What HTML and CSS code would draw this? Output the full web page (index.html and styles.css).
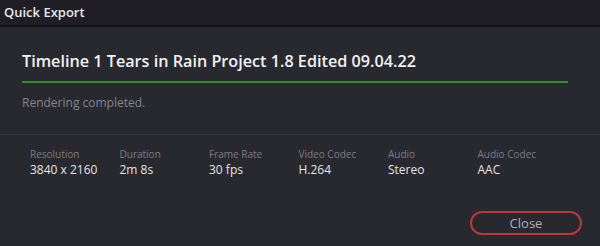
FILE: index.html
```html
<!DOCTYPE html>
<html>
<head>
<meta charset="utf-8">
<link rel="stylesheet" href="styles.css">
</head>
<body>
<div class="dialog">
  <div class="titlebar">Quick Export</div>
  <div class="content">
    <div class="job">Timeline 1 Tears in Rain Project 1.8 Edited 09.04.22</div>
    <div class="progress"><div class="fill"></div></div>
    <div class="status">Rendering completed.</div>
  </div>
  <div class="details">
    <div class="col"><div class="label">Resolution</div><div class="value">3840 x 2160</div></div>
    <div class="col"><div class="label">Duration</div><div class="value">2m 8s</div></div>
    <div class="col"><div class="label">Frame Rate</div><div class="value">30 fps</div></div>
    <div class="col"><div class="label">Video Codec</div><div class="value">H.264</div></div>
    <div class="col"><div class="label">Audio</div><div class="value">Stereo</div></div>
    <div class="col"><div class="label">Audio Codec</div><div class="value">AAC</div></div>
  </div>
  <div class="footer"><button class="close">Close</button></div>
</div>
</body>
</html>
```
FILE: styles.css
```css
html, body { margin: 0; padding: 0; }
body {
  width: 600px; height: 246px; overflow: hidden;
  background: #28282f;
  font-family: "Open Sans", sans-serif;
}
.dialog { display: flex; flex-direction: column; height: 246px; }
.titlebar {
  height: 25px; line-height: 24px;
  background: #1f1e24;
  border-bottom: 2px solid #141317;
  color: #e8e8ea; font-size: 13px; font-weight: 600;
  padding-left: 4px;
}
.content { padding: 22px 32px 0 22px; border-bottom: 1px solid #34343c; height: 108px; box-sizing: border-box; }
.job { color: #f2f2f2; font-size: 16.2px; font-weight: 600; line-height: 24px; }
.progress { margin-top: 8px; height: 2px; background: #1c1c20; }
.progress .fill { height: 2px; width: 100%; background: #2f8f2a; }
.status { margin-top: 12px; color: #85858b; font-size: 12px; line-height: 16px; }
.details { display: grid; grid-template-columns: repeat(6, 89.5px); padding: 12px 0 0 30px; }
.label { color: #7c7c82; font-size: 10px; line-height: 14px; }
.value { color: #e4e4e6; font-size: 12px; line-height: 18px; }
.footer { display: flex; justify-content: flex-end; padding: 32px 18px 0 0; }
.close {
  width: 112px; height: 24px; box-sizing: border-box;
  background: transparent; border: 2px solid #b8393c; border-radius: 12px;
  color: #b0b0b4; font-family: "Open Sans", sans-serif; font-size: 13px; padding: 0;
}
```
